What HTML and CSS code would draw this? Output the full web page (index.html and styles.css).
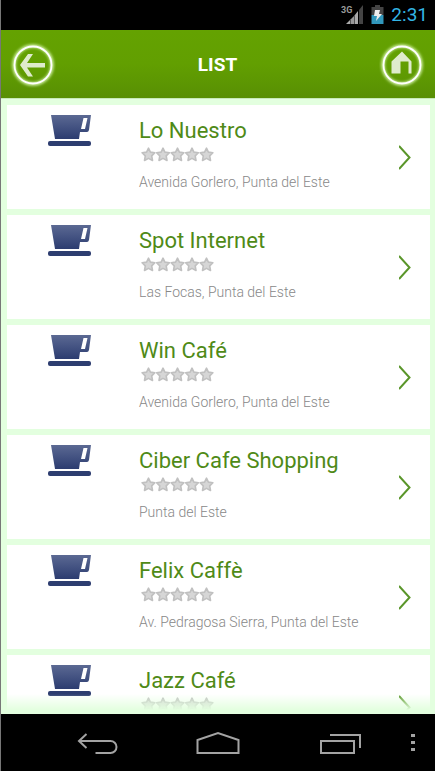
FILE: index.html
```html
<!DOCTYPE html>
<html lang="en">
<head>
<meta charset="utf-8">
<meta name="viewport" content="width=device-width, initial-scale=1">
<title>List</title>
<link rel="stylesheet" href="styles.css">
</head>
<body>
<svg class="defs" aria-hidden="true">
  <defs>
    <linearGradient id="cup-fill" x1="0" y1="0" x2="0" y2="1">
      <stop offset="0" stop-color="#5b6993"/>
      <stop offset="1" stop-color="#2c3c70"/>
    </linearGradient>
    <filter id="glow" x="-30%" y="-30%" width="160%" height="160%">
      <feGaussianBlur stdDeviation="1.4"/>
    </filter>
    <symbol id="cup" viewBox="0 0 43 32">
      <path fill="url(#cup-fill)" fill-rule="evenodd" d="M3 0H43L41 15Q40.500 17 39 17H32L31 24H7ZM35.500 3L33 14H37L39.500 3Z"/>
      <rect y="26" width="43" height="5" rx="2" fill="#2d3d70"/>
    </symbol>
    <symbol id="star" viewBox="0 0 15 15">
      <path d="M7.500 1.200L9.400 5.100L13.900 5.700L10.700 8.900L11.500 13.500L7.500 11.400L3.500 13.500L4.300 8.900L1.100 5.700L5.600 5.100Z" fill="#d6d6d6" stroke="#c0c0c0" stroke-width="1.600" stroke-linejoin="round"/>
    </symbol>
    <symbol id="stars" viewBox="0 0 73 15">
      <use href="#star" x="0" width="15" height="15"/>
      <use href="#star" x="14.500" width="15" height="15"/>
      <use href="#star" x="29" width="15" height="15"/>
      <use href="#star" x="43.500" width="15" height="15"/>
      <use href="#star" x="58" width="15" height="15"/>
    </symbol>
    <symbol id="chevron" viewBox="0 0 12 26">
      <path d="M0 1L10.500 12.500L0 24" fill="none" stroke="#5a962a" stroke-width="2"/>
    </symbol>
  </defs>
</svg>
<div class="screen">
  <div class="status">
    <svg class="signal" viewBox="0 0 23 22" role="img" aria-label="3G signal">
      <text x="0" y="9" class="network">3G</text>
      <path d="M5 20L9 16V20Z" fill="#aaa"/>
      <path d="M9 20V16L13 12V20Z" fill="#999"/>
      <path d="M13 20V12L17 7V20Z" fill="#aaa"/>
      <path d="M18 20V6L22 1V20Z" fill="#444"/>
      <path d="M9.500 15V20M13.500 11V20" stroke="#555"/>
    </svg>
    <svg class="battery" viewBox="0 0 13 20" role="img" aria-label="Battery charging">
      <path d="M4 0H9V2H12.500V10H0.500V2H4Z" fill="#444"/>
      <path d="M0.500 10H12.500V19H0.500Z" fill="#3197bb"/>
      <path d="M4 5H9L8 9H11L5 16L6 11H3Z" fill="#eee"/>
    </svg>
    <time class="clock">2:31</time>
  </div>
  <header class="header">
    <button class="round" type="button" aria-label="Back">
      <svg viewBox="0 0 46 46">
        <circle cx="23" cy="23" r="19" fill="none" stroke="#e4ffc0" stroke-width="3" filter="url(#glow)"/>
        <circle cx="23" cy="23" r="18.500" fill="none" stroke="#fff" stroke-width="1.800"/>
        <path d="M10 23L18 12H23L17 21H35V25.500H17L23 34.500H18Z" fill="#dfebcc"/>
      </svg>
    </button>
    <h1>LIST</h1>
    <button class="round" type="button" aria-label="Home">
      <svg viewBox="0 0 46 46">
        <circle cx="23" cy="23" r="19" fill="none" stroke="#e4ffc0" stroke-width="3" filter="url(#glow)"/>
        <circle cx="23" cy="23" r="18.500" fill="none" stroke="#fff" stroke-width="1.800"/>
        <path d="M23 9.500L32.500 19.500V31.500H29.500V19.500H21.500V31.500H12.500V19.500Z" fill="#dfebcc"/>
      </svg>
    </button>
  </header>
  <main class="content">
    <ul class="list">
      <li><a class="card" href="#lo-nuestro">
        <svg class="cup"><use href="#cup"/></svg>
        <div class="info"><h2>Lo Nuestro</h2><svg class="stars"><use href="#stars"/></svg><p>Avenida Gorlero, Punta del Este</p></div>
        <svg class="chevron"><use href="#chevron"/></svg>
      </a></li>
      <li><a class="card" href="#spot-internet">
        <svg class="cup"><use href="#cup"/></svg>
        <div class="info"><h2>Spot Internet</h2><svg class="stars"><use href="#stars"/></svg><p>Las Focas, Punta del Este</p></div>
        <svg class="chevron"><use href="#chevron"/></svg>
      </a></li>
      <li><a class="card" href="#win-cafe">
        <svg class="cup"><use href="#cup"/></svg>
        <div class="info"><h2>Win Café</h2><svg class="stars"><use href="#stars"/></svg><p>Avenida Gorlero, Punta del Este</p></div>
        <svg class="chevron"><use href="#chevron"/></svg>
      </a></li>
      <li><a class="card" href="#ciber-cafe-shopping">
        <svg class="cup"><use href="#cup"/></svg>
        <div class="info"><h2>Ciber Cafe Shopping</h2><svg class="stars"><use href="#stars"/></svg><p>Punta del Este</p></div>
        <svg class="chevron"><use href="#chevron"/></svg>
      </a></li>
      <li><a class="card" href="#felix-caffe">
        <svg class="cup"><use href="#cup"/></svg>
        <div class="info"><h2>Felix Caffè</h2><svg class="stars"><use href="#stars"/></svg><p>Av. Pedragosa Sierra, Punta del Este</p></div>
        <svg class="chevron"><use href="#chevron"/></svg>
      </a></li>
      <li><a class="card" href="#jazz-cafe">
        <svg class="cup"><use href="#cup"/></svg>
        <div class="info"><h2>Jazz Café</h2><svg class="stars"><use href="#stars"/></svg></div>
        <svg class="chevron"><use href="#chevron"/></svg>
      </a></li>
    </ul>
  </main>
  <nav class="navbar" aria-label="System">
    <span class="side"></span>
    <div class="keys">
      <button type="button" aria-label="Back"><svg viewBox="0 0 44 24">
        <path d="M11.500 3L4 10L11.500 17M4.500 10H35.500A6 6 0 0 1 35.500 22H20.500" fill="none" stroke="#a3a3a3" stroke-width="2"/>
      </svg></button>
      <button type="button" aria-label="Home"><svg viewBox="0 0 44 24">
        <path d="M1.500 22V9L22 2L42.500 9V22Z" fill="none" stroke="#a3a3a3" stroke-width="2"/>
      </svg></button>
      <button type="button" aria-label="Recent apps"><svg viewBox="0 0 44 24">
        <path d="M4 10H37V22H4ZM13 4H43V17" fill="none" stroke="#a3a3a3" stroke-width="2"/>
      </svg></button>
    </div>
    <button class="side" type="button" aria-label="More options"><svg class="dots" viewBox="0 0 4 18">
      <path d="M0 0H4V3H0ZM0 7H4V10H0ZM0 14H4V17H0Z" fill="#a3a3a3"/>
    </svg></button>
  </nav>
</div>
</body>
</html>
```
FILE: styles.css
```css
* {
  box-sizing: border-box;
}

body,
h1,
h2,
p,
ul {
  margin: 0;
  padding: 0;
}

body {
  font-family: Roboto, "Noto Sans", sans-serif;
}

svg {
  display: block;
}

button {
  padding: 0;
  border: 0;
  background: none;
  cursor: pointer;
}

.defs {
  position: absolute;
  width: 0;
  height: 0;
}

.screen {
  display: flex;
  flex-direction: column;
  height: 100vh;
  border-left: 1px solid #777;
  background: #000;
}

.status {
  display: flex;
  justify-content: flex-end;
  align-items: center;
  gap: 7px;
  height: 30px;
  padding-right: 7px;
}

.signal {
  width: 23px;
  height: 22px;
}

.network {
  font-size: 9px;
  font-weight: 700;
  fill: #999;
}

.battery {
  width: 13px;
  height: 20px;
}

.clock {
  font-size: 19px;
  line-height: 32px;
  color: #33b5e5;
}

.header {
  display: flex;
  justify-content: space-between;
  align-items: center;
  height: 68px;
  padding: 2px 10px 0 9px;
  background: linear-gradient(#64a201, #629f01 50%, #588f04);
}

.header h1 {
  font-size: 19px;
  line-height: 24px;
  font-weight: 700;
  color: #fff;
}

.round svg {
  width: 46px;
  height: 46px;
}

.content {
  position: relative;
  flex: 1;
  min-height: 0;
  overflow: hidden;
  border-top: 1px solid #c8e8ba;
  background: #e3ffdf;
}

.content::after {
  content: "";
  position: absolute;
  inset: auto 0 0;
  height: 20px;
  background: linear-gradient(rgba(227, 255, 223, 0), #e3ffdf 80%);
  pointer-events: none;
}

.list {
  display: grid;
  gap: 6px;
  padding: 6px 5px 6px 6px;
  list-style: none;
}

.card {
  display: flex;
  align-items: flex-start;
  height: 104px;
  padding: 10px 19px 0 41px;
  background: #fff;
  text-decoration: none;
}

.cup {
  width: 43px;
  height: 32px;
}

.info {
  flex: 1;
  margin-left: 48px;
}

.info h2 {
  font-size: 22px;
  line-height: 32px;
  font-weight: 400;
  color: #4f8a17;
}

.info p {
  margin-top: 10px;
  font-size: 14px;
  line-height: 20px;
  font-weight: 300;
  color: #888;
}

.stars {
  width: 73px;
  height: 15px;
  margin-left: 2px;
}

.chevron {
  margin-top: 30px;
  width: 12px;
  height: 26px;
}

.navbar {
  display: flex;
  align-items: center;
  height: 57px;
}

.side {
  display: flex;
  justify-content: center;
  width: 44px;
}

.keys {
  display: flex;
  flex: 1;
  justify-content: space-between;
  padding: 0 30px;
}

.keys svg {
  width: 44px;
  height: 24px;
}

.dots {
  width: 4px;
  height: 18px;
}
```
